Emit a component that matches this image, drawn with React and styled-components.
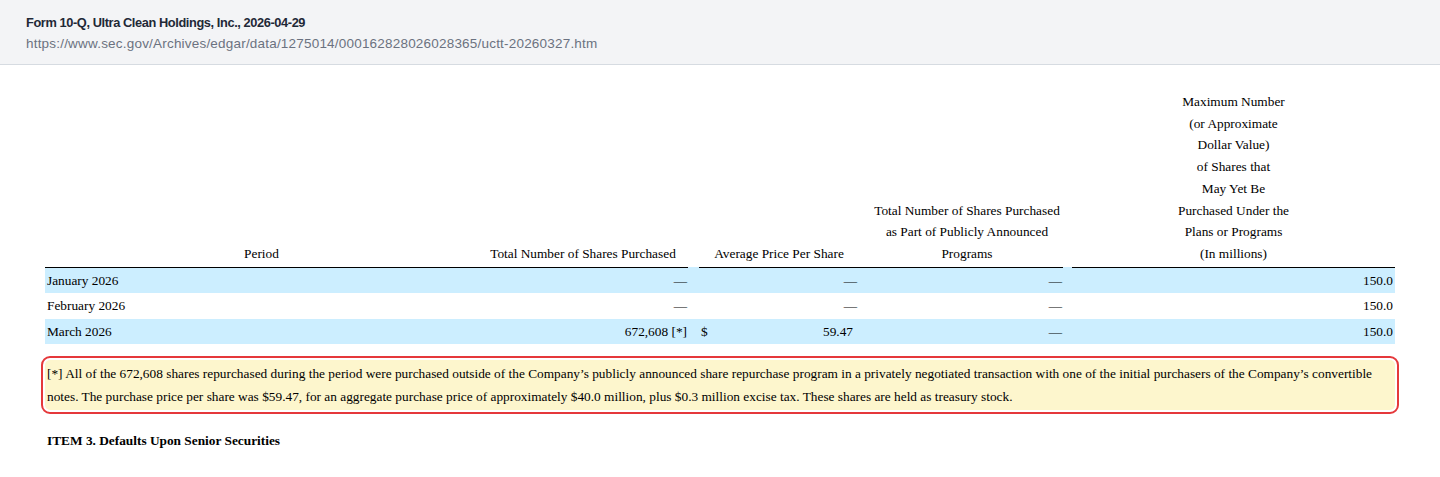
import React from "react";
import styled, { createGlobalStyle } from "styled-components";

const PageStyle = createGlobalStyle`
  body {
    margin: 0;
    background: #fff;
    color: #000;
  }
`;

const SourceBar = styled.header`
  background-color: #f3f4f6;
  border-bottom: 1px solid #d6dbe1;
  padding: 14px 26px 0;
  height: 50px;
  font-family: "Liberation Sans", Arial, sans-serif;
`;

const SourceTitle = styled.div`
  font-size: 12.8px;
  font-weight: 700;
  letter-spacing: -0.4px;
  color: #1f2937;
  line-height: 17px;
`;

const SourceUrl = styled.div`
  margin-top: 4px;
  font-size: 13.5px;
  letter-spacing: 0.2px;
  color: #6b7280;
  line-height: 18px;
`;

const Content = styled.main`
  padding: 26px 45px 0;
  font-family: "Liberation Serif", "Times New Roman", serif;
  font-size: 13.333px;
`;

const RepurchaseTable = styled.table`
  width: 1350px;
  border-collapse: collapse;
  table-layout: fixed;
`;

const HeadCell = styled.th`
  font-weight: 400;
  text-align: center;
  vertical-align: bottom;
  line-height: 21.7px;
  padding: 0 0 2px;
  border-bottom: ${({ $ruled }) => ($ruled ? "1px solid #000" : "none")};
`;

const BodyRow = styled.tr`
  background-color: ${({ $shaded }) => ($shaded ? "#cceeff" : "#fff")};
`;

const Cell = styled.td`
  height: 25.5px;
  padding: 0 ${({ $pr }) => $pr ?? 2}px 0 2px;
  text-align: ${({ $align }) => $align || "left"};
  line-height: 21px;
  white-space: nowrap;
`;

const Money = styled.div`
  display: flex;
  justify-content: space-between;
  padding-right: 4px;
`;

const Footnote = styled.p`
  margin: 16px 0 0;
  padding: 3px 2px 2px;
  line-height: 22.5px;
  background-color: #fdf6cd;
  border-radius: 5px;
  outline: 2px solid #e5383b;
  outline-offset: 2px;
`;

const SectionHeading = styled.h3`
  margin: 20px 0 0 2px;
  font-size: 13.333px;
  font-weight: 700;
  line-height: 22px;
`;

const widths = [433, 210, 11, 160, 12, 192, 9, 323];

const rows = [
  { period: "January 2026", total: "—", price: null, program: "—", remaining: "150.0" },
  { period: "February 2026", total: "—", price: null, program: "—", remaining: "150.0" },
  { period: "March 2026", total: "672,608 [*]", price: "59.47", program: "—", remaining: "150.0" },
];

const maxHeading = [
  "Maximum Number",
  "(or Approximate",
  "Dollar Value)",
  "of Shares that",
  "May Yet Be",
  "Purchased Under the",
  "Plans or Programs",
  "(In millions)",
];

const App = () => {
  return (
    <>
      <PageStyle />
      <SourceBar>
        <SourceTitle>Form 10-Q, Ultra Clean Holdings, Inc., 2026-04-29</SourceTitle>
        <SourceUrl>https://www.sec.gov/Archives/edgar/data/1275014/000162828026028365/uctt-20260327.htm</SourceUrl>
      </SourceBar>
      <Content>
        <RepurchaseTable>
          <colgroup>
            {widths.map((w, i) => (
              <col key={i} style={{ width: w }} />
            ))}
          </colgroup>
          <thead>
            <tr>
              <HeadCell $ruled>Period</HeadCell>
              <HeadCell $ruled>Total Number of Shares Purchased</HeadCell>
              <HeadCell />
              <HeadCell $ruled>Average Price Per Share</HeadCell>
              <HeadCell $ruled />
              <HeadCell $ruled>
                Total Number of Shares Purchased
                <br />
                as Part of Publicly Announced
                <br />
                Programs
              </HeadCell>
              <HeadCell />
              <HeadCell $ruled>
                {maxHeading.map((line, i) => (
                  <React.Fragment key={i}>
                    {i > 0 && <br />}
                    {line}
                  </React.Fragment>
                ))}
              </HeadCell>
            </tr>
          </thead>
          <tbody>
            {rows.map((row, i) => (
              <BodyRow key={row.period} $shaded={i % 2 === 0}>
                <Cell>{row.period}</Cell>
                <Cell $align="right" $pr={1}>{row.total}</Cell>
                <Cell />
                <Cell $align="right">
                  {row.price ? (
                    <Money>
                      <span>$</span>
                      <span>{row.price}</span>
                    </Money>
                  ) : (
                    "—"
                  )}
                </Cell>
                <Cell />
                <Cell $align="right" $pr={1}>{row.program}</Cell>
                <Cell />
                <Cell $align="right">{row.remaining}</Cell>
              </BodyRow>
            ))}
          </tbody>
        </RepurchaseTable>
        <Footnote>
          [*] All of the 672,608 shares repurchased during the period were purchased outside of the Company’s publicly
          announced share repurchase program in a privately negotiated transaction with one of the initial purchasers of
          the Company’s convertible notes. The purchase price per share was $59.47, for an aggregate purchase price of
          approximately $40.0 million, plus $0.3 million excise tax. These shares are held as treasury stock.
        </Footnote>
        <SectionHeading>ITEM 3. Defaults Upon Senior Securities</SectionHeading>
      </Content>
    </>
  );
};

export default App;
